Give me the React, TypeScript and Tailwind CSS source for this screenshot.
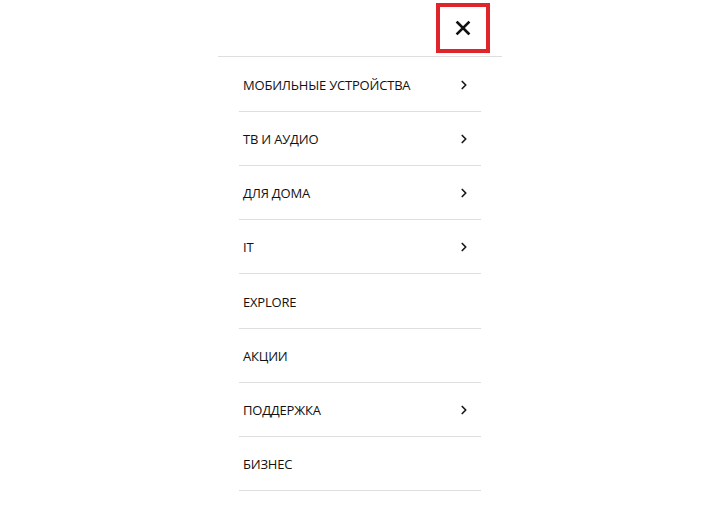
import { ChevronRight } from 'lucide-react'

const ITEMS: [string, boolean][] = [
  ['МОБИЛЬНЫЕ УСТРОЙСТВА', true],
  ['ТВ И АУДИО', true],
  ['ДЛЯ ДОМА', true],
  ['IT', true],
  ['EXPLORE', false],
  ['АКЦИИ', false],
  ['ПОДДЕРЖКА', true],
  ['БИЗНЕС', false],
]

export default function App() {
  return (
    <div className="flex h-[530px] w-[720px] justify-center bg-white" style={{ fontFamily: '"Open Sans", "Liberation Sans", sans-serif' }}>
      <div className="w-[284px]">
        <div className="flex h-[57px] justify-end border-b border-[#dedede] pr-[12px] pt-[3px]">
          <button className="flex h-[50px] w-[54px] items-center justify-center border-4 border-[#e0242b]">
            <svg width="16" height="16" viewBox="0 0 16 16" fill="none" stroke="#111" strokeWidth="2.6" strokeLinecap="square">
              <path d="M2.5 2.5l11 11M13.5 2.5l-11 11" />
            </svg>
          </button>
        </div>
        <ul className="px-[21px] pt-[1px]">
          {ITEMS.map(([label, more], i) => (
            <li
              key={label}
              className={`flex items-center justify-between border-b border-[#dedede] pl-[4px] pr-[10px] ${i === 4 ? 'h-[55px]' : 'h-[54px]'}`}
            >
              <span className="pt-[3px] text-[13px] font-medium tracking-[-0.2px] text-[#111]">{label}</span>
              {more && <ChevronRight size={14} strokeWidth={3} className="text-[#1a1a1a]" />}
            </li>
          ))}
        </ul>
      </div>
    </div>
  )
}
